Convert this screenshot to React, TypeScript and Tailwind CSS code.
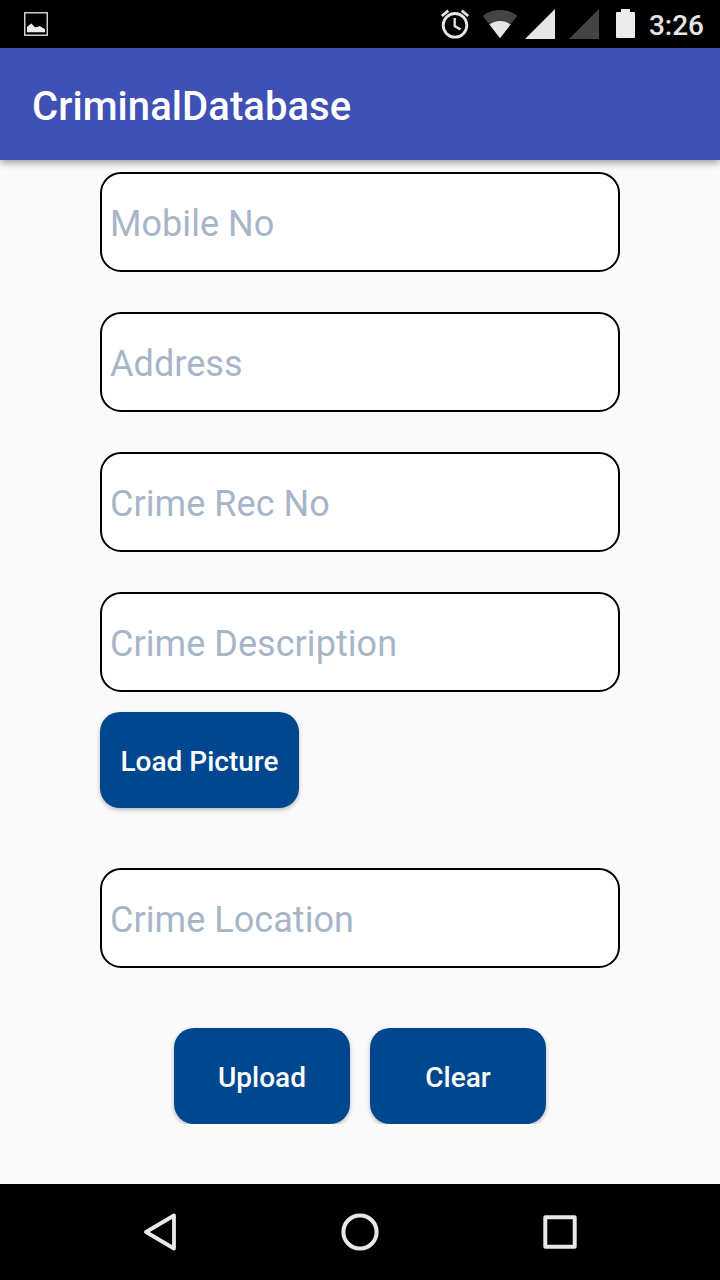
import React from "react";

const BUTTON =
  "h-24 rounded-[20px] bg-[#00478f] text-[28px] leading-none font-medium text-white shadow-[0_2px_4px_rgba(0,0,0,0.26)] pt-[3px]";

function Field({ label }: { label: string }) {
  return (
    <input
      type="text"
      aria-label={label}
      placeholder={label}
      className="block h-[100px] w-[520px] shrink-0 rounded-[21px] border-2 border-black bg-white pt-[3px] pl-2 text-[36px] tracking-[0.05px] text-black outline-none placeholder:text-[#a6b6c8] placeholder:opacity-100"
    />
  );
}

function StatusBar() {
  return (
    <header className="flex h-12 shrink-0 items-center bg-black pl-6 text-[#e6e6e6]">
      <svg width="24" height="24" viewBox="0 0 24 24" fill="none">
        <rect x="0.75" y="0.75" width="22.5" height="22.5" stroke="#cecece" strokeWidth="1.5" />
        <path d="M3 20.3V15L5 13.2L7.400 11.500L11 15.300H12.600L16 14L18 15.500L21 17V20.300Z" fill="#ececec" />
      </svg>
      <div className="ml-auto flex items-center pr-4">
        <svg width="30" height="48" viewBox="440 0 30 48" fill="none" stroke="currentColor">
          <circle cx="455" cy="25.3" r="11.8" strokeWidth="2.8" />
          <path d="M454.7 18V26L460.5 29.6" strokeWidth="2.3" />
          <path d="M441.8 16L448.3 10.6M468.2 16L461.7 10.6" strokeWidth="2.8" />
        </svg>
        <svg className="ml-3" width="36" height="48" viewBox="482 0 36 48">
          <path d="M500 38.2L482.8 15.8C487.5 12 493.5 10 500 10S512.5 12 517.2 15.8Z" fill="#444" />
          <path d="M500 38.2L489.5 24.5C492.5 22.2 496 21 500 21S507.5 22.2 510.5 24.5Z" fill="currentColor" />
        </svg>
        <svg className="ml-[7px]" width="30" height="48" viewBox="525 0 30 48">
          <path d="M525 39H555V9Z" fill="currentColor" />
        </svg>
        <svg className="ml-[14px]" width="30" height="48" viewBox="569 0 30 48">
          <path d="M569 39H599V9Z" fill="#444" />
        </svg>
        <svg className="ml-[17px]" width="19" height="48" viewBox="616 0 19 48">
          <path d="M617 12H621V9H630V12H634Q635 12 635 13V37Q635 38 634 38H617Q616 38 616 37V13Q616 12 617 12Z" fill="#ebebeb" />
        </svg>
        <span className="ml-[14px] pt-[3px] text-[28px] leading-none font-medium">3:26</span>
      </div>
    </header>
  );
}

export default function App() {
  return (
    <div className="flex h-[1280px] w-[720px] flex-col overflow-hidden bg-[#fafafa] font-['Roboto',sans-serif]">
      <StatusBar />
      <div className="flex h-28 shrink-0 items-center bg-[#3f51b5] px-8 pt-1.5 shadow-[0_3px_7px_rgba(0,0,0,0.36)]">
        <h1 className="text-[40px] leading-none font-medium tracking-[0.07px] text-white">CriminalDatabase</h1>
      </div>
      <main className="flex flex-1 flex-col px-[100px] pt-3">
        <div className="flex flex-col gap-10">
          <Field label="Mobile No" />
          <Field label="Address" />
          <Field label="Crime Rec No" />
          <Field label="Crime Description" />
        </div>
        <button type="button" className={`${BUTTON} mt-5 mb-[60px] w-[199px] shrink-0`}>
          Load Picture
        </button>
        <Field label="Crime Location" />
        <div className="mt-[50px] flex justify-center gap-5 overflow-hidden pt-2.5">
          <button type="button" className={`${BUTTON} w-44`}>Upload</button>
          <button type="button" className={`${BUTTON} w-44`}>Clear</button>
        </div>
      </main>
      <nav className="flex h-24 shrink-0 items-center justify-center gap-[152px] bg-black text-[#e8e8e8]">
        <svg width="48" height="48" viewBox="0 0 48 48" fill="none" stroke="currentColor" strokeWidth="3.8" strokeLinejoin="round">
          <path d="M10 24L38 7.500V40.500Z" />
        </svg>
        <svg width="48" height="48" viewBox="0 0 48 48" fill="none" stroke="currentColor" strokeWidth="4">
          <circle cx="24" cy="24" r="16.6" />
        </svg>
        <svg width="48" height="48" viewBox="0 0 48 48" fill="none" stroke="currentColor" strokeWidth="4" strokeLinejoin="round">
          <rect x="9.3" y="9.3" width="29.4" height="29.4" />
        </svg>
      </nav>
    </div>
  );
}
